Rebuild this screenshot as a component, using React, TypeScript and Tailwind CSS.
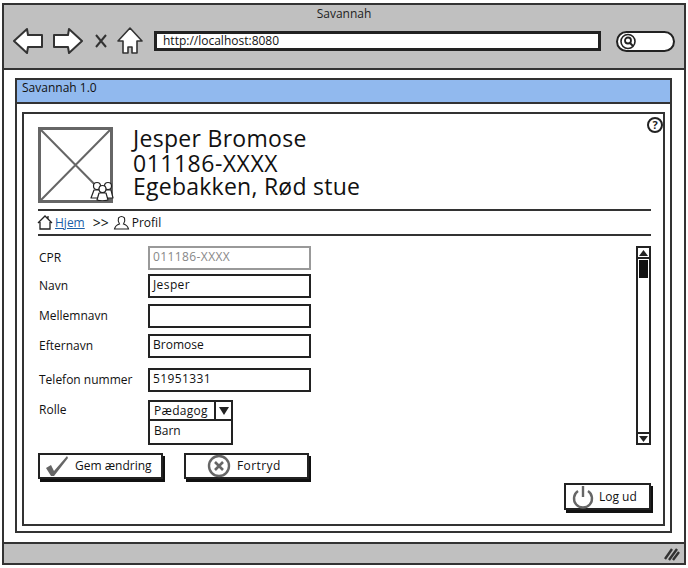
import React from 'react';

const font = { fontFamily: '"Open Sans", sans-serif' };

// sketchy toolbar arrow, drawn pointing left
const Arrow: React.FC<{ flip?: boolean }> = ({ flip }) => (
  <svg width="30" height="28" viewBox="0 0 30 28" className={flip ? '-scale-x-100' : ''}>
    <path d="M1 14 L14 2 L15 8 L29 8 L29 20 L15 20 L14 26 Z" fill="#fff" stroke="#333" strokeWidth="2" strokeLinejoin="round" />
  </svg>
);

const Field: React.FC<{ label: string; value?: string; disabled?: boolean; wide?: boolean; className?: string }> = ({ label, value, disabled, wide, className }) => (
  <div className={`flex items-center ${className ?? ''}`}>
    <span className="w-[110px] pl-[1px] text-[12px] text-[#111]">{label}</span>
    <div className={`w-[163px] h-[24px] border-2 bg-white px-[3px] text-[12px] leading-[18px] ${wide ? 'tracking-[0.4px]' : ''} ${disabled ? 'border-[#999] text-[#888]' : 'border-[#222] text-[#111]'}`}>
      {value}
    </div>
  </div>
);

const App: React.FC = () => {
  return (
    <div className="w-[688px] h-[568px] bg-white px-[2px] pt-[3px] pb-[3px] overflow-hidden" style={font}>
      <div className="relative h-full flex flex-col border-2 border-[#333]">
        {/* Browser toolbar */}
        <div className="h-[65px] shrink-0 bg-[#c0c0c0] border-b-2 border-[#333]">
          <div className="text-center text-[12px] leading-[14px] pt-[2px] text-[#222]">Savannah</div>
          <div className="flex items-center pl-[9px] pt-[6px]">
            <Arrow />
            <div className="ml-[10px]"><Arrow flip /></div>
            <svg width="14" height="16" viewBox="0 0 14 16" className="ml-[11px]">
              <path d="M2 2 L12 14 M12 2 L2 14" stroke="#333" strokeWidth="2" />
            </svg>
            <svg width="26" height="28" viewBox="0 0 26 28" className="ml-[9px]">
              <path d="M1 14 L13 1 L25 14 L20 14 L20 26 L15 26 L15 20 L11 20 L11 26 L6 26 L6 14 Z" fill="#fff" stroke="#333" strokeWidth="1.6" strokeLinejoin="round" />
            </svg>
            <div className="ml-[11px] w-[447px] h-[20px] bg-white border-[3px] border-[#222] pl-[6px] text-[12px] leading-[14px] text-[#111]">
              http://localhost:8080
            </div>
            <div className="ml-[15px] w-[59px] h-[21px] bg-white border-2 border-[#222] rounded-full flex items-center pl-[1px]">
              <svg width="18" height="17" viewBox="0 0 18 17">
                <circle cx="9" cy="8.5" r="7" fill="#fff" stroke="#222" strokeWidth="1.6" />
                <circle cx="9" cy="7.5" r="3" fill="none" stroke="#222" strokeWidth="1.8" />
                <path d="M11 10 L14 13" stroke="#222" strokeWidth="2" />
              </svg>
            </div>
          </div>
        </div>

        {/* Page */}
        <div className="flex-1 flex flex-col pl-[11px] pr-[12px] pt-[8px] pb-[9px]">
          <div className="h-[26px] shrink-0 bg-[#91b9ee] border-2 border-[#333] pl-[5px] text-[12px] leading-[16px] text-[#111]">
            Savannah 1.0
          </div>
          <div className="flex-1 flex flex-col border-x-2 border-b-2 border-[#333] px-[5px] pt-[8px] pb-[5px]">
            <div className="relative flex-1 flex flex-col border-2 border-[#333] pl-[14px] pr-[12px] pt-[13px]">
              <svg width="18" height="18" viewBox="0 0 18 18" className="absolute top-[2px] right-[-1px]">
                <circle cx="9" cy="9" r="7" fill="#fff" stroke="#222" strokeWidth="2" />
                <text x="9" y="13" textAnchor="middle" fontSize="11" fontWeight="700" fill="#222">?</text>
              </svg>

              {/* Profile header */}
              <div className="flex h-[76px]">
                <div className="relative w-[75px] h-[76px] shrink-0">
                  <svg width="75" height="76" viewBox="0 0 75 76">
                    <rect x="1.5" y="1.5" width="72" height="73" fill="#fff" stroke="#666" strokeWidth="3" />
                    <path d="M2 2 L73 74 M73 2 L2 74" stroke="#666" strokeWidth="2" />
                  </svg>
                  <svg width="24" height="20" viewBox="0 0 24 20" className="absolute right-[-1px] bottom-[2px]">
                    <circle cx="7" cy="5" r="3.5" fill="#fff" stroke="#222" strokeWidth="1.2" />
                    <circle cx="18" cy="5" r="3.5" fill="#fff" stroke="#222" strokeWidth="1.2" />
                    <path d="M1 17 L4 9 L10 9 L12 17 Z M13 17 L15 9 L21 9 L23 17 Z" fill="#fff" stroke="#222" strokeWidth="1.2" strokeLinejoin="round" />
                    <circle cx="12.5" cy="8" r="3.5" fill="#fff" stroke="#222" strokeWidth="1.2" />
                    <path d="M7 19 L9 12 L16 12 L18 19 Q12 20.5 7 19 Z" fill="#fff" stroke="#222" strokeWidth="1.2" strokeLinejoin="round" />
                  </svg>
                </div>
                <div className="ml-[20px] text-[23px] text-[#111] -mt-[2px]">
                  <div className="leading-[27px] tracking-[0.3px]">Jesper Bromose</div>
                  <div className="leading-[23px] tracking-[0.5px]">011186-XXXX</div>
                  <div className="leading-[22px] tracking-[0.25px]">Egebakken, Rød stue</div>
                </div>
              </div>

              {/* Breadcrumb */}
              <div className="mt-[6px] h-[27px] border-y-2 border-[#333] flex items-center text-[12px] text-[#111]">
                <svg width="16" height="15" viewBox="0 0 16 15" className="-ml-[1px]">
                  <path d="M1 8 L8 1 L15 8 M3 7 L3 14 L13 14 L13 7 M11 1 L11 4" fill="none" stroke="#222" strokeWidth="1.3" />
                </svg>
                <span className="ml-[2px] text-[#1b5fa8] underline">Hjem</span>
                <span className="ml-[8px] text-[14px]">&gt;&gt;</span>
                <svg width="17" height="15" viewBox="0 0 16 15" className="ml-[4px]">
                  <path d="M1 14 L15 14 Q14 10 10 9 Q12 6 11 3 Q8 0 5 3 Q4 6 6 9 Q2 10 1 14 Z" fill="none" stroke="#222" strokeWidth="1.1" />
                </svg>
                <span className="ml-[2px]">Profil</span>
              </div>

              {/* Form and scrollbar */}
              <div className="flex justify-between pt-[10px]">
                <div>
                  <Field label="CPR" value="011186-XXXX" disabled wide />
                  <Field label="Navn" value="Jesper" wide className="mt-[4px]" />
                  <Field label="Mellemnavn" className="mt-[6px]" />
                  <Field label="Efternavn" value="Bromose" className="mt-[6px]" />
                  <Field label="Telefon nummer" value="51951331" wide className="mt-[10px]" />
                  <div className="flex mt-[8px]">
                    <span className="w-[110px] pl-[1px] text-[12px] leading-[20px] text-[#111]">Rolle</span>
                    <div className="w-[85px] text-[12px] text-[#111]">
                      <div className="flex h-[21px] border-2 border-[#222] bg-white">
                        <span className="flex-1 pl-[4px] leading-[17px] tracking-[0.3px]">Pædagog</span>
                        <span className="w-[17px] border-l-2 border-[#222] flex items-center justify-center">
                          <svg width="10" height="8" viewBox="0 0 10 8"><path d="M0 0 L10 0 L5 8 Z" fill="#222" /></svg>
                        </span>
                      </div>
                      <div className="h-[24px] border-2 border-t-0 border-[#222] bg-white pl-[4px] leading-[19px]">Barn</div>
                    </div>
                  </div>
                </div>
                <div className="w-[15px] h-[199px] border-2 border-[#222] bg-white flex flex-col justify-between">
                  <div>
                    <div className="h-[11px] border-b-2 border-[#222] flex items-center justify-center">
                      <svg width="9" height="6" viewBox="0 0 9 6"><path d="M0 6 L9 6 L4.5 0 Z" fill="#222" /></svg>
                    </div>
                    <div className="mx-[1px] mt-[1px] h-[18px] bg-[#111]" />
                  </div>
                  <div className="h-[11px] border-t-2 border-[#222] flex items-center justify-center">
                    <svg width="9" height="6" viewBox="0 0 9 6"><path d="M0 0 L9 0 L4.5 6 Z" fill="#222" /></svg>
                  </div>
                </div>
              </div>

              {/* Buttons */}
              <div className="flex gap-[21px] mt-[8px]">
                <div className="w-[125px] h-[26px] border-2 border-[#222] shadow-[2px_3px_0_#111] flex items-center pl-[5px] text-[12px] text-[#111]">
                  <svg width="24" height="22" viewBox="0 0 24 22">
                    <path d="M1 13 L6 10 L9 16 L22 1 L23 3 L9 21 L6 21 Z" fill="#666" />
                  </svg>
                  <span className="ml-[6px]">Gem ændring</span>
                </div>
                <div className="w-[125px] h-[26px] border-2 border-[#222] shadow-[2px_3px_0_#111] flex items-center pl-[21px] text-[12px] text-[#111]">
                  <svg width="24" height="24" viewBox="0 0 24 24">
                    <circle cx="12" cy="12" r="10" fill="#fff" stroke="#666" strokeWidth="2.4" />
                    <path d="M8 8 L16 16 M16 8 L8 16" stroke="#666" strokeWidth="2.6" />
                  </svg>
                  <span className="ml-[6px] tracking-[0.4px]">Fortryd</span>
                </div>
              </div>
              <div className="flex justify-end mt-[4px]">
                <div className="w-[87px] h-[27px] border-2 border-[#222] shadow-[2px_3px_0_#111] flex items-center pl-[6px] text-[12px] text-[#111]">
                  <svg width="22" height="24" viewBox="0 0 22 24">
                    <path d="M6 6 A9 9 0 1 0 16 6" fill="none" stroke="#666" strokeWidth="2.4" />
                    <path d="M11 1 L11 12" stroke="#666" strokeWidth="2.4" />
                  </svg>
                  <span className="ml-[5px]">Log ud</span>
                </div>
              </div>
            </div>
          </div>
        </div>

        {/* Status bar */}
        <div className="h-[21px] shrink-0 bg-[#c0c0c0] border-t-2 border-[#333] flex items-center justify-end pr-[4px]">
          <svg width="16" height="14" viewBox="0 0 16 14">
            <path d="M1 12 L8 2 M5 13 L13 2 M9 13 L15 5" stroke="#333" strokeWidth="2.4" />
          </svg>
        </div>
      </div>
    </div>
  );
};

export default App;
